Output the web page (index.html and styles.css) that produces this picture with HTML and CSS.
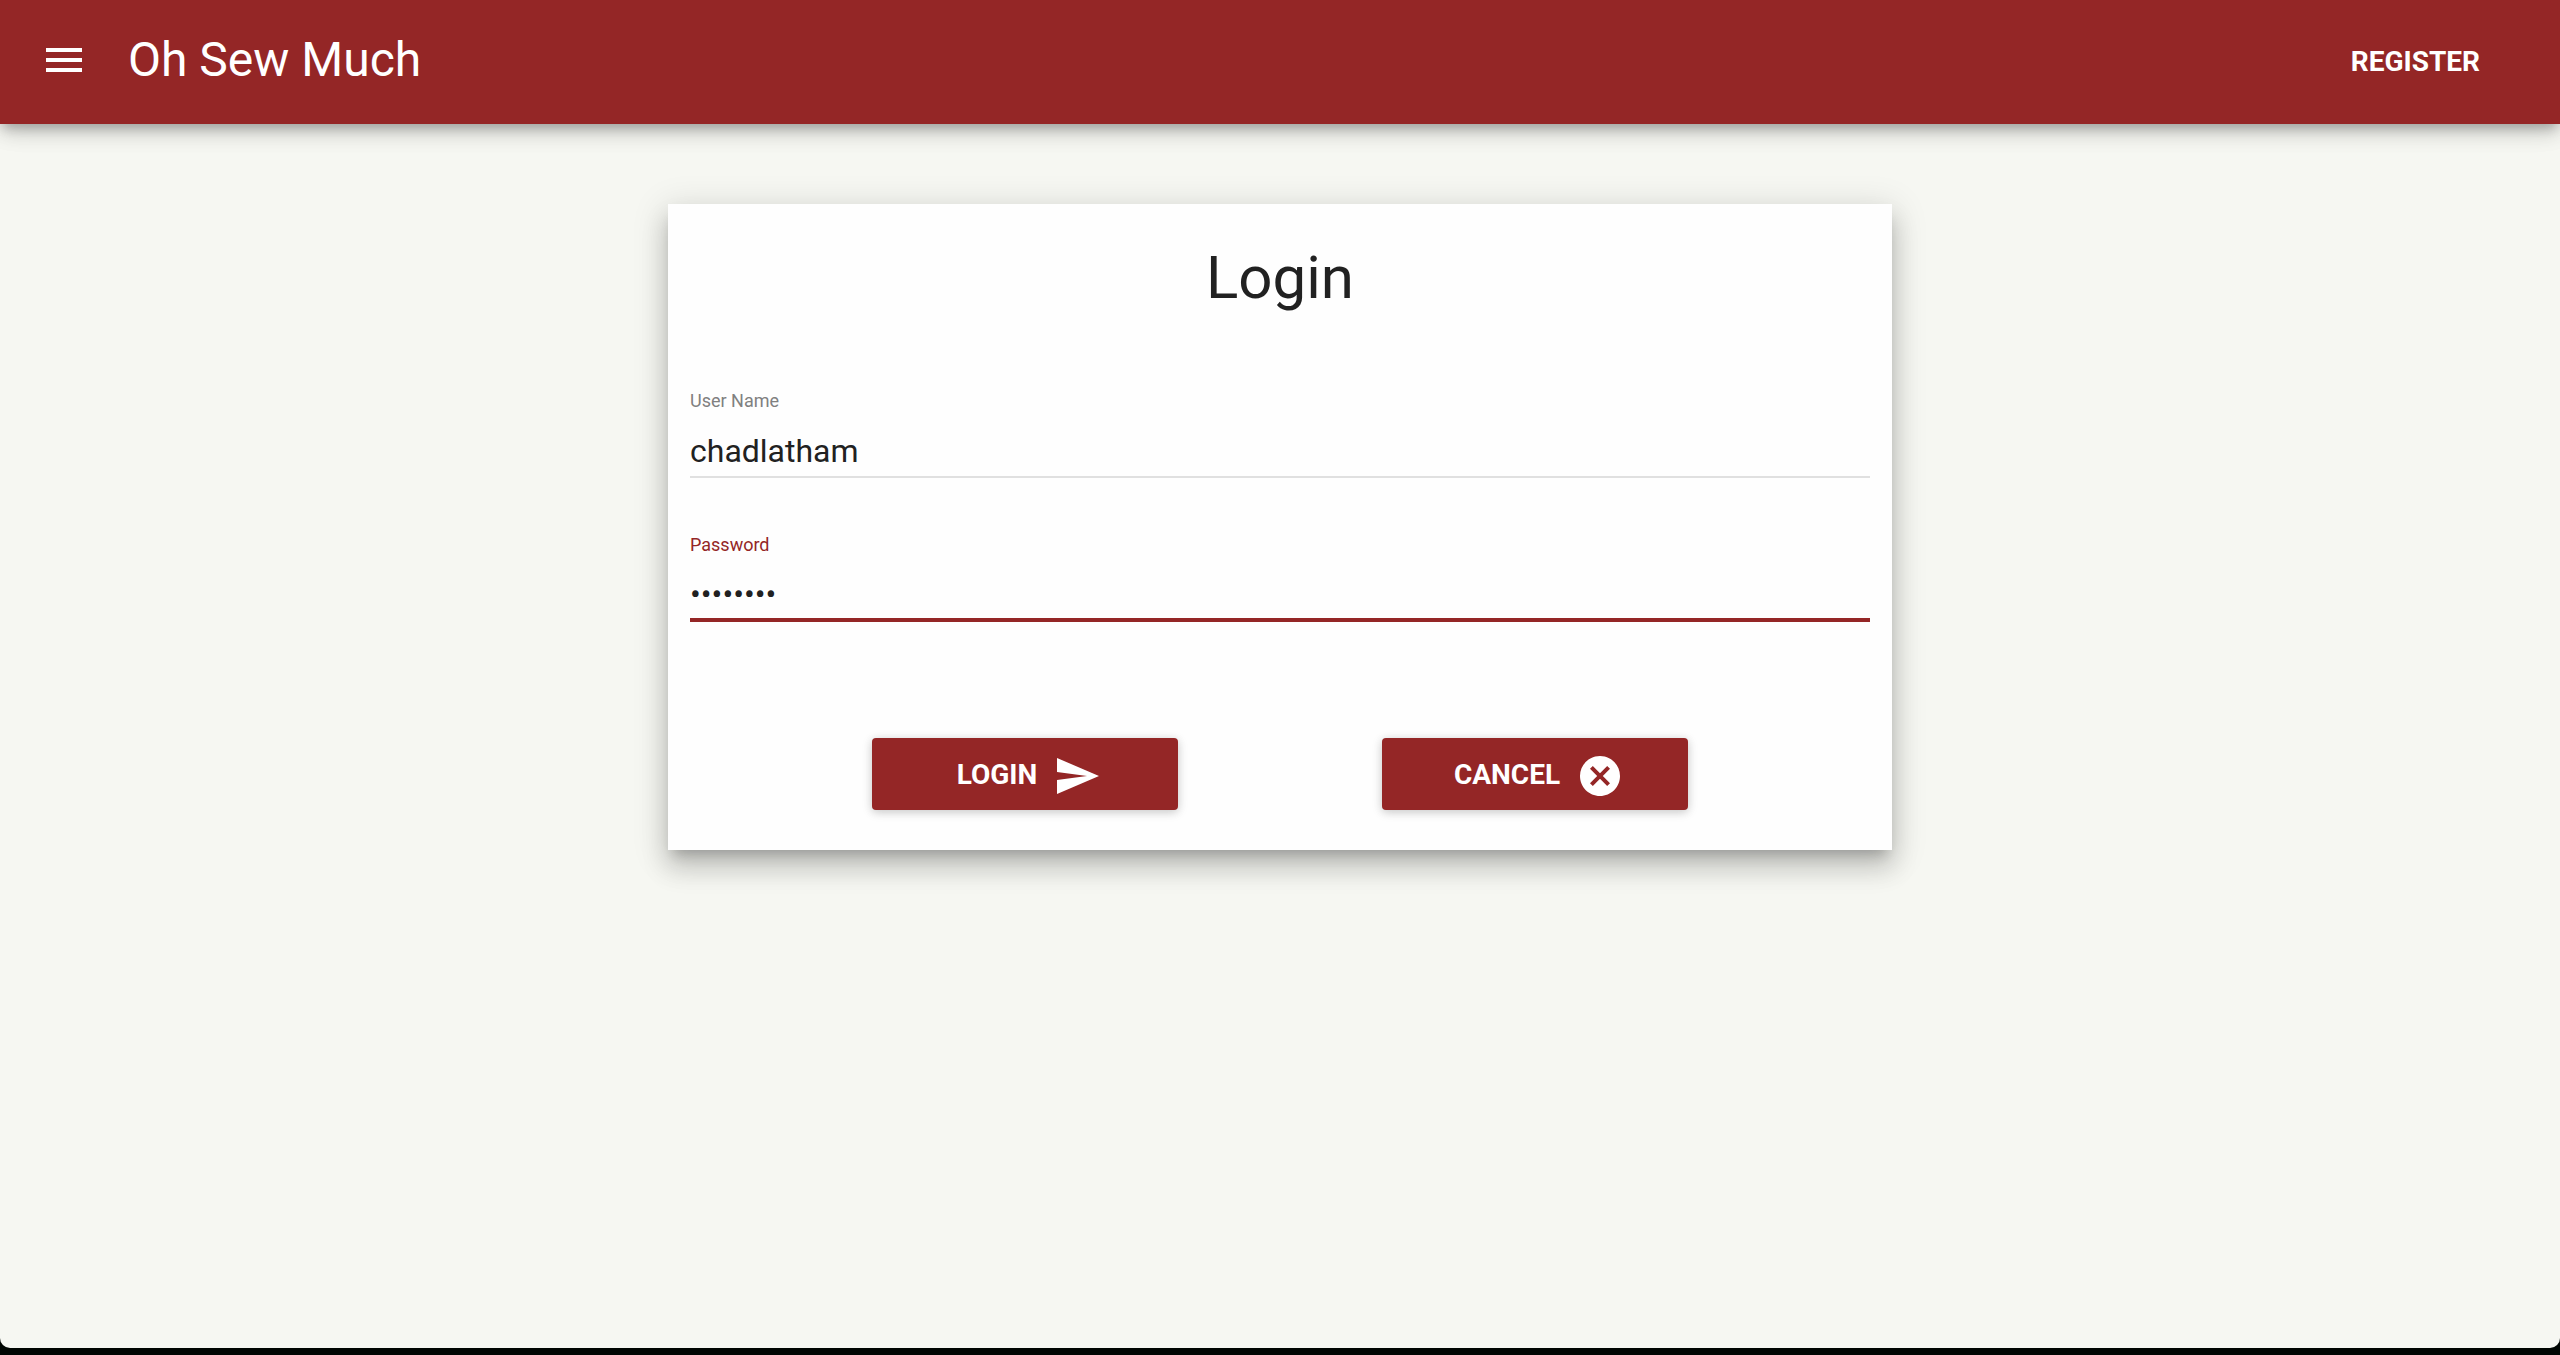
FILE: index.html
```html
<!DOCTYPE html>
<html lang="en">
<head>
<meta charset="utf-8">
<title>Oh Sew Much</title>
<link rel="stylesheet" href="styles.css">
</head>
<body>
<div class="page">
  <header class="app-bar">
    <button class="menu-button" type="button" aria-label="Menu">
      <svg class="menu-icon" viewBox="0 0 24 24" aria-hidden="true"><path d="M3 18h18v-2H3v2zm0-5h18v-2H3v2zm0-7v2h18V6H3z"/></svg>
    </button>
    <h1 class="brand">Oh Sew Much</h1>
    <a class="register" href="#register">REGISTER</a>
  </header>
  <main class="content">
    <form class="card">
      <h2 class="card-title">Login</h2>
      <div class="field">
        <label class="field-label" for="username">User Name</label>
        <input class="field-input" id="username" type="text" value="chadlatham">
      </div>
      <div class="field field-active">
        <label class="field-label" for="password">Password</label>
        <input class="field-input" id="password" type="password" value="password">
      </div>
      <div class="actions">
        <button class="action" type="button">LOGIN
          <svg class="action-icon" viewBox="0 0 24 24" aria-hidden="true"><path d="M2.01 21L23 12 2.01 3 2 10l15 2-15 2z"/></svg>
        </button>
        <button class="action" type="button">CANCEL
          <svg class="action-icon" viewBox="0 0 24 24" aria-hidden="true"><path d="M12 2C6.47 2 2 6.47 2 12s4.47 10 10 10 10-4.47 10-10S17.53 2 12 2zm5 13.59L15.59 17 12 13.41 8.41 17 7 15.59 10.59 12 7 8.41 8.41 7 12 10.59 15.59 7 17 8.41 13.41 12 17 15.59z"/></svg>
        </button>
      </div>
    </form>
  </main>
</div>
</body>
</html>
```
FILE: styles.css
```css
* { box-sizing: border-box; }
body {
  margin: 0;
  min-height: 100vh;
  padding-bottom: 7px;
  display: flex;
  background: #000502;
  color: #212121;
  font-family: Roboto, sans-serif;
}
.page {
  flex: 1;
  background: #f6f7f2;
  border-radius: 0 0 10px 10px;
}
.app-bar {
  display: flex;
  align-items: center;
  height: 124px;
  padding: 0 80px 0 40px;
  background: #942626;
  color: #fff;
  box-shadow: 0 8px 10px -4px rgba(0,0,0,.2), 0 8px 20px rgba(0,0,0,.14), 0 2px 28px rgba(0,0,0,.12);
}
button {
  border: 0;
  background: none;
  color: inherit;
  font: inherit;
}
.menu-button { display: flex; padding: 0; }
.menu-icon { width: 48px; height: 48px; margin-bottom: 4px; }
svg { fill: currentColor; }
.brand {
  flex: 1;
  margin: 0 0 4px 40px;
  font-size: 48px;
  line-height: 64px;
  font-weight: 400;
}
.register {
  color: inherit;
  font-size: 28px;
  line-height: 32px;
  font-weight: 700;
  text-decoration: none;
}
.content { padding: 80px 24px; }
.card {
  max-width: 1224px;
  margin: 0 auto;
  padding: 34px 0 40px;
  background: #fefefe;
  box-shadow: 0 10px 12px -6px rgba(0,0,0,.2), 0 18px 24px 2px rgba(0,0,0,.14), 0 6px 32px 4px rgba(0,0,0,.12);
}
.card-title {
  margin: 0 0 62px;
  font-size: 60px;
  line-height: 80px;
  font-weight: 400;
  text-align: center;
}
.field {
  display: flex;
  flex-direction: column;
  height: 144px;
  padding: 9px 22px 0;
}
.field-label { font-size: 18px; line-height: 24px; color: #808080; }
.field-input {
  height: 65px;
  padding: 12px 0 0;
  border: 0;
  border-bottom: 2px solid #e0e0e0;
  background: none;
  color: inherit;
  font-family: inherit;
  font-size: 32px;
  outline: 0;
}
.field-active .field-label { color: #942626; }
.field-active .field-input { height: 65px; border-bottom: 4px solid #942626; }
.actions { display: flex; justify-content: space-evenly; margin-top: 70px; }
.action {
  display: flex;
  align-items: center;
  justify-content: center;
  gap: 16px;
  width: 25%;
  height: 72px;
  padding: 0 0 0 8px;
  border-radius: 4px;
  background: #942626;
  color: #fff;
  font-size: 28px;
  font-weight: 700;
  box-shadow: 0 2px 12px rgba(0,0,0,.12), 0 2px 8px rgba(0,0,0,.12);
}
.action-icon { width: 48px; height: 48px; margin-top: 4px; }
```
